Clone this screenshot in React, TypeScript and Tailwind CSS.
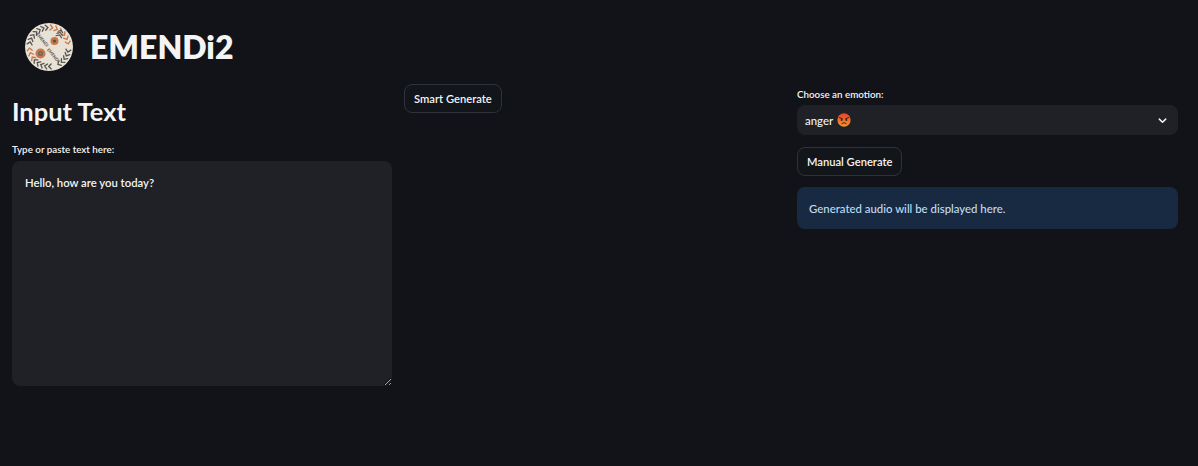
const FONT = "font-['Lato','Noto_Sans',sans-serif]";

const GRAY_ANGLES = [192, 204, 216, 228, 240, 252, 264, 12, 24, 36, 48, 60, 88, 100, 112, 124, 136];
const ORANGE_ANGLES = [278, 292, 306, 320, 334, 348, 146, 160, 174];

function Logo() {
  return (
    <svg viewBox="-50 -50 100 100" className="w-[50px] h-[50px] shrink-0">
      <circle r="48" fill="#e8e1d6" />
      {/* rim of chevrons */}
      <g fill="none" strokeLinecap="round" strokeWidth="2.6">
        {GRAY_ANGLES.map((a) => (
          <path key={a} transform={`rotate(${a}) translate(39 0)`} d="M-5 -3 L0 2 L5 -3" stroke="#55534f" />
        ))}
        {ORANGE_ANGLES.map((a) => (
          <path key={a} transform={`rotate(${a}) translate(39 0)`} d="M-5 -3 L0 2 L5 -3" stroke="#c8764a" />
        ))}
      </g>
      {/* sprig */}
      <g fill="none" stroke="#55534f" strokeWidth="2.2" strokeLinecap="round" transform="translate(22 -27) rotate(20)">
        <path d="M-5 -3 L0 -7 L5 -3 M-6 2 L0 -2 L6 2 M-6 7 L0 3 L6 7" />
      </g>
      <circle cx="11" cy="-12" r="8" fill="#c8764a" />
      <circle cx="11" cy="-12" r="3.2" fill="#55534f" />
      <circle cx="-17" cy="13" r="10" fill="#c8764a" />
      <circle cx="-17" cy="13" r="5" fill="#6a6661" />
      <circle cx="-17" cy="13" r="2" fill="#c8764a" />
      <text transform="translate(-14 -14) rotate(50)" textAnchor="middle" dominantBaseline="middle" fontSize="8.5" fontWeight="700" fill="#4d4b47" fontFamily="Lato, sans-serif">EMENDi</text>
      <text transform="translate(8 17) rotate(50)" textAnchor="middle" dominantBaseline="middle" fontSize="8.5" fontWeight="700" fill="#4d4b47" fontFamily="Lato, sans-serif">EMENDi</text>
    </svg>
  );
}

function AngryFace() {
  return (
    <svg viewBox="0 0 20 20" className="w-[14px] h-[14px] inline-block">
      <defs>
        <linearGradient id="angry" x1="0" y1="0" x2="0" y2="1">
          <stop offset="0" stopColor="#e8452c" />
          <stop offset="1" stopColor="#f79329" />
        </linearGradient>
      </defs>
      <circle cx="10" cy="10" r="9.5" fill="url(#angry)" />
      <path d="M3.5 6.5 L8 8.6 M16.5 6.5 L12 8.6" stroke="#4a2a1a" strokeWidth="1.5" strokeLinecap="round" />
      <circle cx="6.6" cy="10" r="1.3" fill="#3a2418" />
      <circle cx="13.4" cy="10" r="1.3" fill="#3a2418" />
      <path d="M7 15 Q10 12.4 13 15" fill="none" stroke="#3a2418" strokeWidth="1.4" strokeLinecap="round" />
    </svg>
  );
}

function Button({ children }: { children: string }) {
  return (
    <button className="h-[29px] pl-[9px] pr-[9px] pt-px rounded-lg border border-[#2f3238] bg-[#12151a] text-[#f4f4f5] text-[11.2px] font-semibold">
      {children}
    </button>
  );
}

export default function App() {
  return (
    <div className={`w-[1198px] h-[466px] overflow-hidden bg-[#111318] px-3 pt-[22px] text-[#f4f4f5] ${FONT}`}>
      {/* Logo */}
      <div className="flex items-center gap-4 pl-[12px] h-[50px]">
        <Logo />
        <h1 className="text-[32px] leading-none font-extrabold">EMENDi2</h1>
      </div>

      <div className="grid grid-cols-[380px_381px_381px] gap-x-3 mt-3">
        {/* Input */}
        <div>
          <h2 className="text-[25.5px] leading-[34px] font-bold mt-[10px]">Input Text</h2>
          <label className="block text-[9.8px] leading-[14px] font-semibold mt-[14px]">Type or paste text here:</label>
          <textarea
            defaultValue="Hello, how are you today?"
            className="block w-full h-[225px] mt-[5px] rounded-lg bg-[#1f2127] text-[11.3px] leading-[18px] px-[13px] pt-[13px] pb-3 outline-none text-[#f4f4f5] font-semibold"
          />
        </div>

        {/* Smart generate */}
        <div>
          <Button>Smart Generate</Button>
        </div>

        {/* Emotion */}
        <div>
          <label className="block text-[9.8px] leading-[14px] font-semibold mt-[3px]">Choose an emotion:</label>
          <div className="flex items-center justify-between h-[30px] mt-[4px] rounded-lg bg-[#1f2127] pl-2 pr-[10px]">
            <span className="flex items-center gap-1 text-[11.4px] font-medium pt-px">
              anger <AngryFace />
            </span>
            <svg viewBox="0 0 12 12" className="w-[11px] h-[11px]" fill="none" stroke="#f4f4f5" strokeWidth="1.6" strokeLinecap="round" strokeLinejoin="round">
              <path d="M2.5 4.5 L6 8 L9.5 4.5" />
            </svg>
          </div>
          <div className="mt-3">
            <Button>Manual Generate</Button>
          </div>
          <div className="flex items-center h-[42px] mt-[11px] pt-px rounded-lg bg-[#172a41] px-3 text-[11.4px] font-medium text-[#c0dcf5]">
            Generated audio will be displayed here.
          </div>
        </div>
      </div>
    </div>
  );
}
